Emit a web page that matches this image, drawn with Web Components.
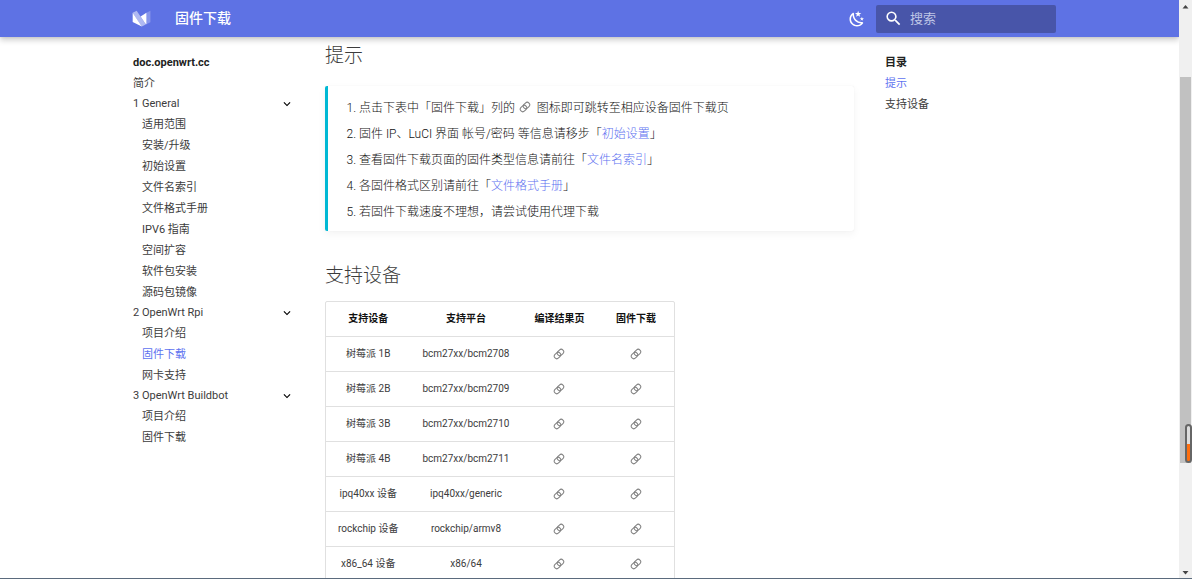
<!DOCTYPE html>
<html lang="zh-CN">
<head>
<meta charset="utf-8">
<title>固件下载</title>
<style>
  body {
    margin: 0;
    background: #fff;
    color: #3c3c3c;
    font-family: Roboto, "Noto Sans CJK SC", sans-serif;
    font-weight: 400;
    --primary: #5e72e4;
    --link: #5e72f0;
  }
  doc-tip a {
    color: var(--link);
    text-decoration: none;
  }
  doc-tip link-icon {
    margin: 0 3px 3px 1px;
  }
</style>
</head>
<body>
<doc-page>
  <doc-header slot="header" title-text="固件下载"></doc-header>
  <doc-nav slot="nav"></doc-nav>
  <doc-toc slot="toc"></doc-toc>
  <doc-section heading="提示">
    <doc-tip>
      <ol>
        <li>点击下表中「固件下载」列的 <link-icon></link-icon> 图标即可跳转至相应设备固件下载页</li>
        <li>固件 IP、LuCI 界面 帐号/密码 等信息请移步「<a href="#setup">初始设置</a>」</li>
        <li>查看固件下载页面的固件类型信息请前往「<a href="#names">文件名索引</a>」</li>
        <li>各固件格式区别请前往「<a href="#formats">文件格式手册</a>」</li>
        <li>若固件下载速度不理想，请尝试使用代理下载</li>
      </ol>
    </doc-tip>
  </doc-section>
  <doc-section heading="支持设备">
    <device-table></device-table>
  </doc-section>
</doc-page>

<script>
class DocElement extends HTMLElement {
  constructor() {
    super();
    this.attachShadow({ mode: 'open' });
  }

  connectedCallback() {
    this.shadowRoot.innerHTML = this.getTemplate();
  }
}

class DocPage extends DocElement {
  getTemplate() {
    return `
        <style>
        :host {
          display: flex;
          flex-direction: column;
          height: 100vh;
        }
        .view {
          flex: 1;
          min-height: 0;
          display: flex;
          border-bottom: 1px solid #5b6b7d;
        }
        .page {
          flex: 1;
          min-width: 0;
          display: flex;
          flex-direction: column;
          overflow: hidden;
        }
        .grid {
          flex: 1;
          min-height: 0;
          width: 100%;
          max-width: 933px;
          margin: 0 auto;
          display: grid;
          grid-template-columns: 185px 1fr 185px;
        }
        main {
          padding: 4px 17px 0;
        }
        </style>
        <div class="view">
          <div class="page">
            <slot name="header"></slot>
            <div class="grid">
              <slot name="nav"></slot>
              <main><slot></slot></main>
              <slot name="toc"></slot>
            </div>
          </div>
          <scroll-track></scroll-track>
        </div>
    `;
  }
}

class DocHeader extends DocElement {
  getTemplate() {
    return `
        <style>
        :host {
          display: block;
          position: relative;
          z-index: 1;
          background: var(--primary);
          color: #fff;
          box-shadow: 0 0 3px rgba(0, 0, 0, .1), 0 3px 6px rgba(0, 0, 0, .2);
        }
        header {
          box-sizing: border-box;
          max-width: 933px;
          height: 37px;
          margin: 0 auto;
          padding-left: 9px;
          display: flex;
          align-items: center;
        }
        svg {
          display: block;
          fill: currentColor;
        }
        .title {
          flex: 1;
          margin-left: 24px;
          padding-bottom: 3px;
          font-size: 14px;
          font-weight: 500;
        }
        a {
          color: inherit;
        }
        button {
          margin: 0 10px 0 0;
          padding: 0;
          border: 0;
          background: none;
          color: inherit;
        }
        .search {
          box-sizing: border-box;
          width: 180px;
          height: 28px;
          padding: 0 8px 1px;
          display: flex;
          align-items: center;
          gap: 7px;
          border-radius: 2px;
          background: #4855a9;
        }
        input {
          flex: 1;
          min-width: 0;
          padding: 0;
          border: 0;
          outline: 0;
          background: none;
          color: #fff;
          font: 13px Roboto, "Noto Sans CJK SC", sans-serif;
        }
        input::placeholder {
          color: #bfc5e6;
        }
        </style>
        <header>
          <a href="#home" aria-label="doc.openwrt.cc">
            <svg width="19" height="19" viewBox="0 0 89 89">
              <path d="M3.136,17.387l0,42.932l42.932,21.467l-42.932,-64.399Z"/>
              <path d="M21.91,8l42.933,64.398l-18.775,9.388l-42.932,-64.399l18.774,-9.387Z" opacity=".5"/>
              <path d="M67.535,17.387l-27.262,18.156l21.878,32.818l5.384,2.691l0,-53.665Z"/>
              <path d="M67.535,17.387l0,53.666l18.774,-9.388l0,-53.665l-18.774,9.387Z" opacity=".25"/>
            </svg>
          </a>
          <span class="title">${this.getAttribute('title-text')}</span>
          <button type="button" aria-label="切换主题">
            <svg width="18" height="18" viewBox="0 0 24 24">
              <path d="m17.75 4.09-2.53 1.94.91 3.06-2.63-1.81-2.63 1.81.91-3.06-2.53-1.94L12.44 4l1.06-3 1.06 3 3.19.09m3.5 6.91-1.64 1.25.59 1.98-1.7-1.17-1.7 1.17.59-1.98L15.75 11l2.06-.05L18.5 9l.69 1.95 2.06.05m-2.28 4.95c.83-.08 1.72 1.1 1.19 1.85-.32.45-.66.87-1.08 1.27C15.17 23 8.84 23 4.94 19.07c-3.91-3.9-3.91-10.24 0-14.14.4-.4.82-.76 1.27-1.08.75-.53 1.93.36 1.85 1.19-.27 2.86.69 5.83 2.89 8.02a9.96 9.96 0 0 0 8.02 2.89m-1.64 2.02a12.08 12.08 0 0 1-7.8-3.47c-2.17-2.19-3.33-5-3.49-7.82-2.81 3.14-2.7 7.96.31 10.98 3.02 3.01 7.84 3.12 10.98.31Z"/>
            </svg>
          </button>
          <label class="search">
            <svg width="19" height="19" viewBox="0 0 24 24">
              <path d="M9.5 3A6.5 6.5 0 0 1 16 9.5c0 1.61-.59 3.09-1.56 4.23l.27.27h.79l5 5-1.5 1.5-5-5v-.79l-.27-.27A6.516 6.516 0 0 1 9.5 16 6.5 6.5 0 0 1 3 9.5 6.5 6.5 0 0 1 9.5 3m0 2C7 5 5 7 5 9.5S7 14 9.5 14 14 12 14 9.5 12 5 9.5 5Z"/>
            </svg>
            <input type="text" placeholder="搜索" aria-label="搜索">
          </label>
        </header>
    `;
  }
}

const navGroups = [
  {
    name: '1 General',
    items: ['适用范围', '安装/升级', '初始设置', '文件名索引', '文件格式手册', 'IPV6 指南', '空间扩容', '软件包安装', '源码包镜像'],
  },
  { name: '2 OpenWrt Rpi', items: ['项目介绍', '固件下载', '网卡支持'], active: 1 },
  { name: '3 OpenWrt Buildbot', items: ['项目介绍', '固件下载'] },
];

class DocNav extends DocElement {
  getTemplate() {
    const groups = navGroups
      .map(
        (group) => `
          <button type="button" aria-expanded="true">
            <span>${group.name}</span>
            <svg width="14" height="14" viewBox="0 0 24 24"><path d="M7.41 8.58L12 13.17l4.59-4.59L18 10l-6 6-6-6 1.41-1.42Z"/></svg>
          </button>
          <ul>
            ${group.items
              .map((item, i) => `<li><a href="#${item}"${i === group.active ? ' class="active"' : ''}>${item}</a></li>`)
              .join('')}
          </ul>`
      )
      .join('');
    return `
        <style>
        :host {
          display: block;
          padding: 15px 14px 0 10px;
          font-size: 11px;
          line-height: 21px;
        }
        .site, .intro {
          display: block;
        }
        .site {
          color: #222;
          font-weight: 700;
        }
        a {
          color: inherit;
          text-decoration: none;
        }
        a.active {
          color: var(--link);
        }
        button {
          width: 100%;
          padding: 0;
          border: 0;
          background: none;
          display: flex;
          justify-content: space-between;
          align-items: center;
          color: inherit;
          font: inherit;
          line-height: 20px;
          text-align: left;
        }
        ul {
          margin: 0;
          padding: 0 0 0 9px;
          list-style: none;
        }
        </style>
        <nav>
          <a class="site" href="#home">doc.openwrt.cc</a>
          <a class="intro" href="#intro">简介</a>
          ${groups}
        </nav>
    `;
  }
}

class DocToc extends DocElement {
  getTemplate() {
    return `
        <style>
        :host {
          display: block;
          padding: 15px 14px 0;
          font-size: 11px;
          line-height: 21px;
        }
        a, strong {
          display: block;
          color: inherit;
          text-decoration: none;
        }
        strong {
          color: #222;
        }
        a.active {
          color: var(--link);
        }
        </style>
        <nav>
          <strong>目录</strong>
          <a class="active" href="#提示">提示</a>
          <a href="#支持设备">支持设备</a>
        </nav>
    `;
  }
}

class DocSection extends DocElement {
  getTemplate() {
    return `
        <style>
        :host {
          display: block;
          margin-bottom: 30px;
        }
        h2 {
          margin: 0 0 10px;
          font-size: 19px;
          font-weight: 300;
          line-height: 30px;
        }
        </style>
        <h2>${this.getAttribute('heading')}</h2>
        <slot></slot>
    `;
  }
}

class DocTip extends DocElement {
  getTemplate() {
    return `
        <style>
        :host {
          display: block;
          margin-top: 15px;
          padding: 9px 9px 6px;
          border-left: 3px solid #00b8d4;
          border-radius: 2px;
          box-shadow: 0 3px 8px rgba(0, 0, 0, .05), 0 0 1px rgba(0, 0, 0, .1);
          color: #111;
          font-size: 12px;
          font-weight: 300;
          line-height: 26px;
        }
        ::slotted(ol) {
          margin: 0;
          padding: 0 0 0 22px;
        }
        </style>
        <slot></slot>
    `;
  }
}

class LinkIcon extends DocElement {
  getTemplate() {
    return `
        <style>
        :host {
          display: inline-block;
          vertical-align: middle;
          color: #808080;
        }
        svg {
          display: block;
          fill: none;
          stroke: currentColor;
        }
        </style>
        <svg width="12" height="12" viewBox="0 0 24 24" stroke-width="2">
          <rect x="8" y="4" width="14" height="10" rx="5" transform="rotate(-45 15 9)"/>
          <rect x="2" y="10" width="14" height="10" rx="5" transform="rotate(-45 9 15)"/>
        </svg>
    `;
  }
}

const devices = [
  ['树莓派 1B', 'bcm27xx/bcm2708'],
  ['树莓派 2B', 'bcm27xx/bcm2709'],
  ['树莓派 3B', 'bcm27xx/bcm2710'],
  ['树莓派 4B', 'bcm27xx/bcm2711'],
  ['ipq40xx 设备', 'ipq40xx/generic'],
  ['rockchip 设备', 'rockchip/armv8'],
  ['x86_64 设备', 'x86/64'],
];

class DeviceTable extends DocElement {
  getTemplate() {
    const rows = devices
      .map(
        ([name, platform]) => `
          <tr>
            <td>${name}</td>
            <td>${platform}</td>
            <td><a href="#build" aria-label="编译结果页"><link-icon></link-icon></a></td>
            <td><a href="#download" aria-label="固件下载"><link-icon></link-icon></a></td>
          </tr>`
      )
      .join('');
    return `
        <style>
        :host {
          display: block;
        }
        table {
          border: 1px solid #e0e0e0;
          border-radius: 2px;
          border-spacing: 0;
          font-size: 10px;
          line-height: 16px;
          text-align: center;
        }
        th, td {
          height: 34px;
          padding: 0 12px;
        }
        th {
          color: #111;
          font-weight: 700;
        }
        td {
          border-top: 1px solid #e0e0e0;
        }
        th:first-child { min-width: 60px; }
        th:nth-child(2) { min-width: 86px; }
        th:nth-child(3) { min-width: 52px; }
        th:nth-child(4) { min-width: 53px; }
        </style>
        <table>
          <thead>
            <tr><th>支持设备</th><th>支持平台</th><th>编译结果页</th><th>固件下载</th></tr>
          </thead>
          <tbody>${rows}</tbody>
        </table>
    `;
  }
}

class ScrollTrack extends DocElement {
  getTemplate() {
    return `
        <style>
        :host {
          position: relative;
          width: 13px;
          display: flex;
          flex-direction: column;
          align-items: center;
          background: #f0f0f0;
        }
        svg {
          flex: none;
          fill: #444;
        }
        .thumb {
          width: 11px;
          margin-top: 60px;
          flex: 386;
          background: #c1c1c1;
        }
        .rest {
          flex: 98;
        }
        /* floating gauge over the thumb */
        .gauge {
          position: absolute;
          right: 0;
          bottom: 115px;
          box-sizing: border-box;
          width: 7px;
          height: 39px;
          border: 2px solid #666;
          border-radius: 4px;
          background: linear-gradient(#ddd 52%, #ff6f0f 52%);
        }
        </style>
        <svg width="13" height="17" viewBox="0 0 13 17"><path d="M6.500 5l3 3.500h-6z"/></svg>
        <div class="thumb"></div>
        <div class="rest"></div>
        <svg width="13" height="17" viewBox="0 0 13 17"><path d="M6.500 13.500l3-3.500h-6z"/></svg>
        <div class="gauge"></div>
    `;
  }
}

customElements.define('link-icon', LinkIcon);
customElements.define('scroll-track', ScrollTrack);
customElements.define('doc-page', DocPage);
customElements.define('doc-header', DocHeader);
customElements.define('doc-nav', DocNav);
customElements.define('doc-toc', DocToc);
customElements.define('doc-section', DocSection);
customElements.define('doc-tip', DocTip);
customElements.define('device-table', DeviceTable);
</script>
</body>
</html>
